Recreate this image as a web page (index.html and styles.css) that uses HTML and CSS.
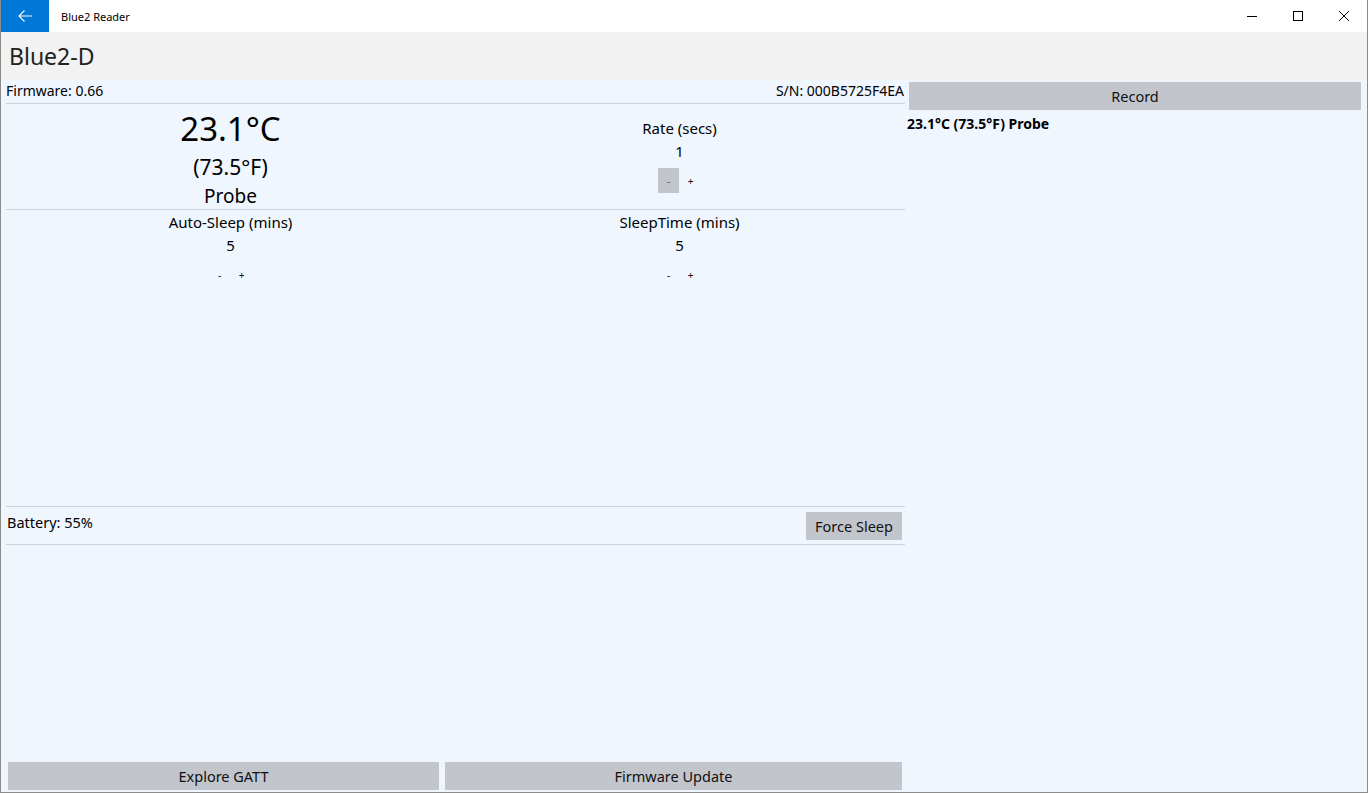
FILE: index.html
```html
<!DOCTYPE html>
<html>
<head>
<meta charset="utf-8">
<link rel="stylesheet" href="styles.css">
</head>
<body>
<div class="window">
  <div class="titlebar">
    <div class="back"><svg width="16" height="16" viewBox="0 0 16 16"><path d="M15 8H2M7.5 2.5L2 8l5.5 5.5" fill="none" stroke="#fff" stroke-width="1.1"/></svg></div>
    <div class="apptitle">Blue2 Reader</div>
    <div class="caps">
      <div class="cap"><svg width="10" height="10" viewBox="0 0 10 10"><path d="M0 5.5h10" stroke="#000" stroke-width="1"/></svg></div>
      <div class="cap"><svg width="10" height="10" viewBox="0 0 10 10"><rect x="0.5" y="0.5" width="9" height="9" fill="none" stroke="#000" stroke-width="1"/></svg></div>
      <div class="cap"><svg width="10" height="10" viewBox="0 0 10 10"><path d="M0 0L10 10M10 0L0 10" stroke="#000" stroke-width="1"/></svg></div>
    </div>
  </div>
  <div class="pagehead">Blue2-D</div>
  <div class="content">
    <div class="left">
      <div class="inforow">
        <span>Firmware: 0.66</span>
        <span>S/N: 000B5725F4EA</span>
      </div>
      <div class="grid top">
        <div class="cell temp">
          <div class="tc">23.1°C</div>
          <div class="tf">(73.5°F)</div>
          <div class="tp">Probe</div>
        </div>
        <div class="cell setting rate">
          <div class="label">Rate (secs)</div>
          <div class="val">1</div>
          <div class="btns"><span class="sb gray">-</span><span class="sb">+</span></div>
        </div>
      </div>
      <div class="grid mid">
        <div class="cell setting">
          <div class="label">Auto-Sleep (mins)</div>
          <div class="val">5</div>
          <div class="btns"><span class="sb">-</span><span class="sb">+</span></div>
        </div>
        <div class="cell setting">
          <div class="label">SleepTime (mins)</div>
          <div class="val">5</div>
          <div class="btns"><span class="sb">-</span><span class="sb">+</span></div>
        </div>
      </div>
      <div class="battrow">
        <span class="batt">Battery: 55%</span>
        <span class="btn force">Force Sleep</span>
      </div>
      <div class="spacer"></div>
      <div class="bottom">
        <span class="btn wide1">Explore GATT</span>
        <span class="btn wide2">Firmware Update</span>
      </div>
    </div>
    <div class="right">
      <div class="btn record">Record</div>
      <div class="log">23.1°C (73.5°F) Probe</div>
    </div>
  </div>
</div>
</body>
</html>
```

FILE: styles.css
```css
* { box-sizing: border-box; }
html, body { margin: 0; padding: 0; }
body { font-family: "Noto Sans", "Open Sans", sans-serif; color: #000; background: #fff; }
.window {
  width: 1368px; height: 793px;
  border: 1px solid #8c8c8c; border-top: none;
  display: flex; flex-direction: column;
  overflow: hidden;
}
.titlebar { height: 32px; background: #fff; display: flex; align-items: center; flex: none; }
.back { width: 48px; height: 32px; background: #0078d7; display: flex; align-items: center; justify-content: center; }
.apptitle { font-size: 11px; margin-left: 12px; flex: 1; }
.caps { display: flex; height: 32px; }
.cap { width: 46px; height: 32px; display: flex; align-items: center; justify-content: center; }
.pagehead { height: 47px; background: #f2f2f2; font-size: 23px; color: #222; padding: 9px 0 0 8px; flex: none; line-height: 30px; }
.content { flex: 1; background: #eff6fe; display: flex; padding: 0 6px 2px 5px; }
.left { width: 899px; display: flex; flex-direction: column; }
.right { flex: 1; padding: 3px 0 0 2px; display: flex; flex-direction: column; }
.inforow { display: flex; justify-content: space-between; font-size: 14px; height: 25px; line-height: 24px; border-bottom: 1px solid #cfd3d8; padding-right: 1px; }
.grid { display: grid; grid-template-columns: 449px 449px; border-bottom: 1px solid #cfd3d8; }
.grid.top { height: 106px; }
.grid.mid { height: 297px; }
.cell { display: flex; flex-direction: column; align-items: center; }
.temp { padding-top: 5px; }
.tc { font-size: 33px; line-height: 40px; }
.tf { font-size: 21px; line-height: 36px; }
.tp { font-size: 19px; line-height: 22px; }
.setting { padding-top: 1px; }
.rate { padding-top: 13px; }
.label { font-size: 15px; line-height: 22px; }
.val { font-size: 15px; line-height: 22px; margin-top: 1px; }
.btns { display: flex; gap: 1px; margin-top: 6px; }
.sb { width: 21px; height: 25px; display: flex; align-items: center; justify-content: center; font-size: 10px; color: #111; }
.sb.gray { background: #c2c6cc; color: #555; }
.battrow { display: flex; justify-content: space-between; height: 38px; border-bottom: 1px solid #cfd3d8; padding: 5px 3px 0 1px; }
.batt { font-size: 14.5px; line-height: 20px; }
.btn { background: #c2c6cc; display: flex; align-items: center; justify-content: center; font-size: 14.5px; color: #111; }
.force { width: 96px; height: 28px; }
.spacer { flex: 1; }
.bottom { display: flex; gap: 6px; padding-left: 2px; height: 28px; }
.wide1 { width: 431px; }
.wide2 { width: 457px; }
.record { height: 28px; margin-left: 2px; }
.log { font-weight: bold; font-size: 14px; line-height: 24px; margin-top: 2px; }
```
